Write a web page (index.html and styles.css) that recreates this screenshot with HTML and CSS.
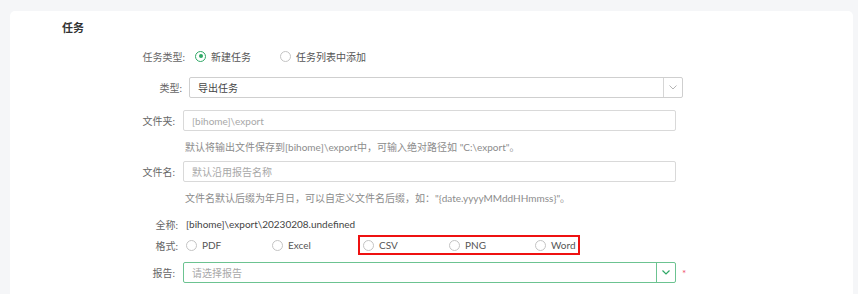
FILE: index.html
```html
<!DOCTYPE html>
<html lang="zh-CN">
<head>
<meta charset="utf-8">
<title>任务</title>
<link rel="stylesheet" href="styles.css">
</head>
<body>
<div class="card">
  <h2 class="title">任务</h2>

  <div class="row row-tasktype">
    <span class="label">任务类型:</span>
    <label class="radio checked"><span class="circle"></span>新建任务</label>
    <label class="radio"><span class="circle"></span>任务列表中添加</label>
  </div>

  <div class="row row-type">
    <span class="label">类型:</span>
    <div class="select">
      <span class="select-value">导出任务</span>
      <span class="select-arrow"><svg width="8" height="5" viewBox="0 0 8 5"><path d="M0.5 0.5 L4 4 L7.5 0.5" fill="none" stroke="#b5b5b5" stroke-width="1"/></svg></span>
    </div>
  </div>

  <div class="row row-input">
    <span class="label">文件夹:</span>
    <div class="input"><span class="placeholder">[bihome]\export</span></div>
  </div>
  <div class="hint">默认将输出文件保存到[bihome]\export中，可输入绝对路径如 "C:\export"。</div>

  <div class="row row-input row-name">
    <span class="label">文件名:</span>
    <div class="input"><span class="placeholder">默认沿用报告名称</span></div>
  </div>
  <div class="hint">文件名默认后缀为年月日，可以自定义文件名后缀，如："{date.yyyyMMddHHmmss}"。</div>

  <div class="row row-full">
    <span class="label">全称:</span>
    <span class="value">[bihome]\export\20230208.undefined</span>
  </div>

  <div class="row row-format">
    <span class="label">格式:</span>
    <label class="radio opt"><span class="circle"></span>PDF</label>
    <label class="radio opt"><span class="circle"></span>Excel</label>
    <div class="highlight">
      <label class="radio opt"><span class="circle"></span>CSV</label>
      <label class="radio opt"><span class="circle"></span>PNG</label>
      <label class="radio opt opt-last"><span class="circle"></span>Word</label>
    </div>
  </div>

  <div class="row row-report">
    <span class="label">报告:</span>
    <div class="select select-active">
      <span class="select-value placeholder">请选择报告</span>
      <span class="select-arrow"><svg width="8" height="5" viewBox="0 0 8 5"><path d="M0.5 0.5 L4 4 L7.5 0.5" fill="none" stroke="#2fa866" stroke-width="1.2"/></svg></span>
    </div>
    <span class="required">*</span>
  </div>
</div>
</body>
</html>
```

FILE: styles.css
```css
* { box-sizing: border-box; }

html, body {
  margin: 0;
  padding: 0;
  background: #f5f6f8;
  font-family: "Lato", "Noto Sans CJK SC", sans-serif;
  font-size: 10px;
  color: #555;
}

.card {
  margin: 11px 5px 0 10px;
  height: 283px;
  background: #fff;
  border-radius: 5px 5px 0 0;
  padding-top: 10px;
}

.title {
  margin: 0 0 0 52px;
  font-size: 11px;
  line-height: 14px;
  font-weight: bold;
  color: #333;
}

.row {
  display: flex;
  align-items: center;
}

.label {
  width: 60px;
  text-align: right;
  margin-right: 8px;
  color: #666;
  white-space: nowrap;
  flex: none;
}

.row-tasktype { height: 20px; margin-top: 11px; padding-left: 115px; }
.row-tasktype .label { margin-right: 10px; }
.row-tasktype .radio { width: 85px; }

.row-type { margin-top: 11px; padding-left: 112px; }
.row-type .label { margin-right: 7px; }

.row-input { margin-top: 12px; padding-left: 105px; }
.row-name { margin-top: 6px; }

.hint {
  margin-top: 8px;
  padding-left: 175px;
  line-height: 16px;
  color: #8c8c8c;
  white-space: nowrap;
}

.row-full { height: 16px; margin-top: 10px; padding-left: 108px; }
.value { color: #444; }

.row-format { height: 20px; margin-top: 3px; padding-left: 108px; }

.row-report { margin-top: 7px; padding-left: 105px; }

.radio {
  display: flex;
  align-items: center;
  color: #555;
  white-space: nowrap;
}

.circle {
  width: 11px;
  height: 11px;
  border: 1px solid #c4c4c4;
  border-radius: 50%;
  margin-right: 5px;
  flex: none;
  display: flex;
  align-items: center;
  justify-content: center;
}

.radio.checked .circle { border-color: #2fa866; }
.radio.checked .circle::after {
  content: "";
  width: 4px;
  height: 4px;
  border-radius: 50%;
  background: #2fa866;
}

.opt { width: 86px; }
.opt-last { width: 40px; }

.highlight {
  display: flex;
  align-items: center;
  height: 20px;
  border: 2px solid #ee1111;
  padding-left: 3px;
  width: 222px;
}

.select, .input {
  display: flex;
  align-items: center;
  height: 21px;
  border: 1px solid #d9d9d9;
  border-radius: 2px;
  background: #fff;
}

.select { width: 494px; border-color: #cfcfcf; }
.input { width: 493px; padding-left: 8px; }

.select-value {
  flex: 1;
  padding-left: 8px;
  color: #444;
}

.select-arrow {
  width: 19px;
  height: 100%;
  border-left: 1px solid #d6d6d6;
  display: flex;
  align-items: center;
  justify-content: center;
}

.placeholder { color: #a8a8a8; }

.select-active { width: 493px; border-color: #6cc391; }
.select-active .select-arrow { border-left-color: #6cc391; }
.select-active .select-value { color: #a8a8a8; }

.required {
  color: #f0506e;
  margin-left: 6px;
  font-size: 10px;
}
```
